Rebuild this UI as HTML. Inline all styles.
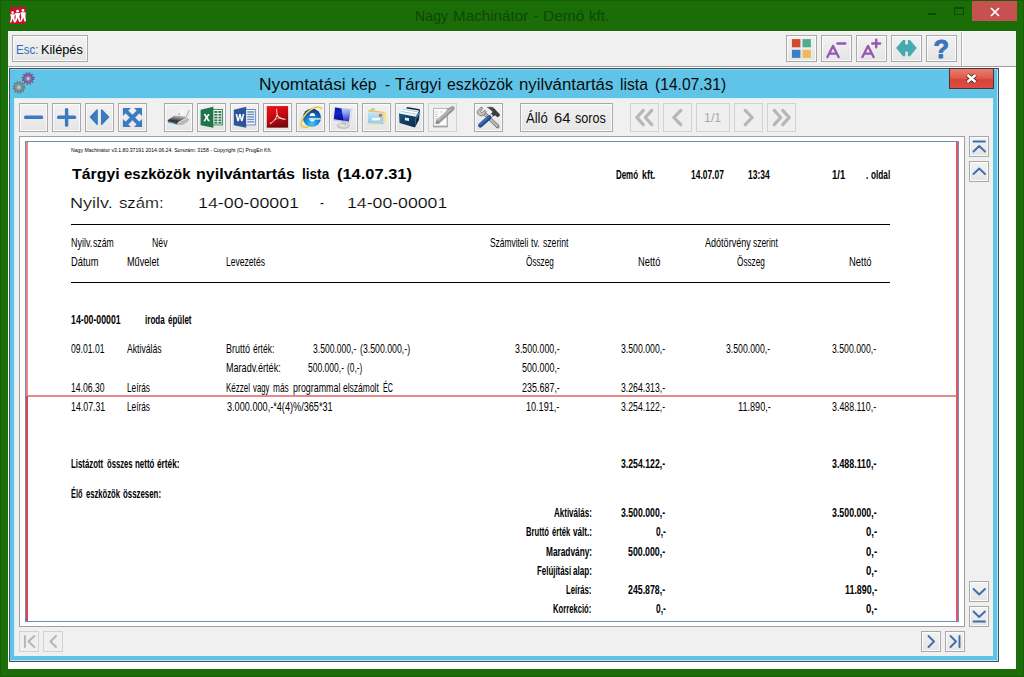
<!DOCTYPE html>
<html lang="hu">
<head>
<meta charset="utf-8">
<title>Nagy Machinátor - Demó kft.</title>
<style>
*{box-sizing:border-box;margin:0;padding:0}
html,body{width:1024px;height:677px;overflow:hidden;background:#1b6e07;font-family:"Liberation Sans",sans-serif}
#root{position:relative;width:1024px;height:677px;background:#1b6e07;overflow:hidden}
.a{position:absolute}
.t{position:absolute;white-space:pre;line-height:1;transform-origin:0 0;color:#000}
.btn{position:absolute;border:1px solid #a9a9a9;background:linear-gradient(#f2f2f2,#e5e5e5);box-shadow:inset 0 0 0 1px rgba(255,255,255,.75)}
.btn.dis{border-color:#d2d2d2;background:#efefef;box-shadow:none}
.btn svg{position:absolute;left:0;top:0}
</style>
</head>
<body>
<div id="root">
<!-- outer window frame -->
<div class="a" style="left:0;top:0;width:1024px;height:677px;border:1px solid #175f06"></div>
<!-- app icon -->
<svg class="a" style="left:10px;top:7px" width="16" height="17" viewBox="0 0 16 17">
<rect width="16" height="17" fill="#c4122f"/>
<g fill="#fff">
<circle cx="2.6" cy="5.6" r="1.3"/><path d="M0.2 7.2h4.8l-0.6 3.6 1 4.6h-1.3l-1.5-3.6-1.3 3.6H0l1-4.6z"/>
<circle cx="7.6" cy="4.2" r="1.4"/><path d="M5 6h5.2l-0.8 4 1.2 5h-1.4l-1.6-4-1.6 4H4.6l1.2-5z"/>
<circle cx="13" cy="3.4" r="1.4"/><path d="M10.4 5.2h5.4l-0.4 4.4 0.6 5h-1.5l-1.3-4-1.5 4h-1.4l1.1-5z"/>
</g>
</svg>
<!-- caption buttons -->
<div class="a" style="left:928px;top:13px;width:8px;height:2px;background:#0d4a03"></div>
<div class="a" style="left:954px;top:7px;width:10px;height:8px;border:1px solid #0d4a03;border-top-width:2px"></div>
<div class="a" style="left:972px;top:1px;width:45px;height:20px;background:#c75050"></div>
<svg class="a" style="left:990px;top:6.5px" width="10" height="10" viewBox="0 0 10 10"><path d="M1 1l8 8M9 1l-8 8" stroke="#fff" stroke-width="1.7" fill="none"/></svg>

<!-- client area -->
<div class="a" style="left:8px;top:31px;width:1008px;height:638px;background:#fff"></div>
<!-- top toolbar -->
<div class="a" style="left:8px;top:31px;width:1008px;height:36px;background:#f0f0f0;border-bottom:1px solid #a0a0a0;border-top:1px solid #fafafa"></div>
<div class="a" style="left:961px;top:32px;width:2px;height:34px;background:#b0b0b0;border-right:1px solid #fff"></div>
<div class="btn" style="left:12px;top:35px;width:76px;height:27px"></div>
<div class="btn" style="left:786px;top:35px;width:31px;height:27px"><svg style="left:-1px;top:-1px" width="31" height="27" viewBox="0 0 31 27"><rect x="5.900" y="4.100" width="8.500" height="8.200" fill="#d24a2d"/><rect x="16.500" y="4.100" width="8.400" height="8.200" fill="#4eae8c"/><rect x="5.900" y="14.800" width="8.500" height="8.100" fill="#3a80c4"/><rect x="16.500" y="14.800" width="8.400" height="8.100" fill="#f0b95f"/></svg></div>
<div class="btn" style="left:821px;top:35px;width:31px;height:27px"><svg style="left:-1px;top:-1px" width="31" height="27" viewBox="0 0 31 27"><path d="M6.400 22.100L12 10.900L17.600 22.100M8.700 18.700H15.300" fill="none" stroke="#9657b3" stroke-width="2.300" stroke-linecap="round" stroke-linejoin="round"/><path d="M16.500 8.500H24.200" stroke="#9657b3" stroke-width="2.400" stroke-linecap="round"/></svg></div>
<div class="btn" style="left:856px;top:35px;width:31px;height:27px"><svg style="left:-1px;top:-1px" width="31" height="27" viewBox="0 0 31 27"><path d="M6.400 22.100L12 10.900L17.600 22.100M8.700 18.700H15.300" fill="none" stroke="#9657b3" stroke-width="2.300" stroke-linecap="round" stroke-linejoin="round"/><path d="M16.300 8.500H24.100M20.200 4.800V12.200" stroke="#9657b3" stroke-width="2.400" stroke-linecap="round"/></svg></div>
<div class="btn" style="left:891px;top:35px;width:31px;height:27px"><svg style="left:-1px;top:-1px" width="31" height="27" viewBox="0 0 31 27"><g fill="#45abb0"><path d="M5.100 12.900L12 5.100H14.300V21.200H12Z"/><path d="M25.800 12.900L19 5.100H16.900V21.200H19Z"/><rect x="14" y="9.400" width="3.200" height="7.200"/></g></svg></div>
<div class="btn" style="left:926px;top:35px;width:31px;height:27px"><svg style="left:-1px;top:-1px" width="31" height="27" viewBox="0 0 31 27"><text x="15.300" y="22.900" text-anchor="middle" font-family="Liberation Sans" font-weight="bold" font-size="25.500" fill="#3b74b9" stroke="#3b74b9" stroke-width="0.900" stroke-linejoin="round">?</text></svg></div>

<!-- inner window -->
<div class="a" style="left:9px;top:68px;width:990px;height:594px;background:#60c4e8;border:1px solid #3b5563"></div>
<div class="a" style="left:14px;top:98px;width:979px;height:558px;background:#f0f0f0;border:1px solid #d6eef8;border-right:0;border-bottom:0"></div>
<div class="a" style="left:10px;top:660px;width:988px;height:1px;background:#b5e2f5"></div><div class="a" style="left:997px;top:69px;width:1px;height:592px;background:#b5e2f5"></div>
<div class="a" style="left:10px;top:69px;width:988px;height:1px;background:#8ad4ef"></div>
<svg class="a" style="left:10px;top:69px" width="32" height="28" viewBox="0 0 32 28"><circle cx="18.1" cy="9.5" r="5.7" fill="none" stroke="#6a5484" stroke-width="1.400" stroke-dasharray="1.492 1.492"/><circle cx="18.1" cy="9.5" r="5.100" fill="#6a5484"/><circle cx="18.1" cy="9.5" r="4.300" fill="#84639a"/><circle cx="18.1" cy="9.5" r="2.600" fill="#9580aa"/><circle cx="18.1" cy="9.5" r="1.500" fill="#9ad4ee"/><circle cx="8.9" cy="18.3" r="5.7" fill="none" stroke="#66787c" stroke-width="1.400" stroke-dasharray="1.492 1.492"/><circle cx="8.9" cy="18.3" r="5.100" fill="#66787c"/><circle cx="8.9" cy="18.3" r="4.300" fill="#7f8e8a"/><circle cx="8.9" cy="18.3" r="2.600" fill="#93a29e"/><circle cx="8.9" cy="18.3" r="1.500" fill="#9ad4ee"/></svg>
<!-- inner close -->
<div class="a" style="left:949px;top:68px;width:45px;height:21px;border:1px solid #4d3535;background:linear-gradient(#ea7d6f,#e05a4d 48%,#d7433a 56%,#dc4c42)"></div>
<svg class="a" style="left:965px;top:72px" width="13" height="13" viewBox="0 0 13 13"><path d="M2.5 3l8 7M10.5 3l-8 7" stroke="#3a2a2a" stroke-width="4.2" fill="none"/><path d="M2.5 3l8 7M10.5 3l-8 7" stroke="#fff" stroke-width="2.4" fill="none"/></svg>

<!-- inner toolbar buttons -->
<div class="btn" style="left:19px;top:103px;width:29px;height:29px"><svg style="left:-1px;top:-1px" width="29" height="29" viewBox="0 0 29 29"><rect x="5" y="12.6" width="19.2" height="3.4" rx="1.6" fill="#3a7bbf"/></svg></div>
<div class="btn" style="left:52px;top:103px;width:29px;height:29px"><svg style="left:-1px;top:-1px" width="29" height="29" viewBox="0 0 29 29"><rect x="5" y="12.6" width="19.2" height="3.4" rx="1.6" fill="#3a7bbf"/><rect x="12.9" y="5" width="3.4" height="18.8" rx="1.6" fill="#3a7bbf"/></svg></div>
<div class="btn" style="left:85px;top:103px;width:29px;height:29px"><svg style="left:-1px;top:-1px" width="29" height="29" viewBox="0 0 29 29"><path d="M5.500 14.100L12.100 7.100V21.300Z M23.500 14.100L16.700 7.100V21.300Z" fill="#3a7bbf" stroke="#3a7bbf" stroke-width="1.500" stroke-linejoin="round"/></svg></div>
<div class="btn" style="left:118px;top:103px;width:29px;height:29px"><svg style="left:-1px;top:-1px" width="29" height="29" viewBox="0 0 29 29"><g fill="#3a7bbf"><path d="M4.9 4.9H12.9L4.9 12.9Z M24 4.9V12.9L16 4.9Z M4.9 24V16L12.9 24Z M24 24H16L24 16Z"/><path d="M7 9.7L9.7 7 21.9 19.2 19.2 21.9Z M19.2 7L21.9 9.7 9.7 21.9 7 19.2Z"/></g></svg></div>
<div class="btn" style="left:164px;top:103px;width:29px;height:29px"><svg style="left:-1px;top:-1px" width="29" height="29" viewBox="0 0 29 29"><defs><linearGradient id="pg" x1="0.7" y1="0" x2="0.3" y2="1"><stop offset="0" stop-color="#c4c4c4"/><stop offset="0.35" stop-color="#8b8b8b"/><stop offset="0.75" stop-color="#3a3a3a"/><stop offset="1" stop-color="#1c1c1c"/></linearGradient><linearGradient id="pp" x1="0" y1="0" x2="1" y2="0.3"><stop offset="0" stop-color="#fcfcfc"/><stop offset="0.85" stop-color="#eeeeee"/><stop offset="1" stop-color="#9c9c9c"/></linearGradient></defs>
<path d="M16.900 6.100L25.300 7.200L22.400 13.900L15 12.500Z" fill="url(#pp)"/>
<path d="M25.100 7.300L22.300 13.800" stroke="#a0a0a0" stroke-width="0.700"/>
<path d="M15.300 10V12.600" stroke="#8e8e8e" stroke-width="0.800"/>
<path d="M3.600 17.300L10.400 12.700L21 13.700L24.600 15.900L24.200 18.200L18.200 21.900L12.700 21.400L4.500 19.600Z" fill="#a6a6a6"/>
<path d="M3.600 17.300L10.400 12.700L21 13.700L22.600 14.700L13.800 19.300Z" fill="url(#pg)"/>
<path d="M4.300 18.300L13.300 20L13 21.500L4.500 19.700Z" fill="#2d7fa3"/>
<path d="M5.300 19.300L9.500 20.100L9.400 20.900L5.400 20.200Z" fill="#b4dcea"/>
<path d="M13.800 19.300L22.600 14.700L23.500 15.300L14.400 20.300Z" fill="#e6e6e6"/>
<path d="M14.400 20.300L23.500 15.300L24.600 15.900L24.200 18.200L18.200 21.900L13.200 21.400Z" fill="#b9b9b9"/>
<path d="M3.600 17.300L13.800 19.300L13.300 20L4.300 18.300Z" fill="#1a1a1a"/></svg></div>
<div class="btn" style="left:197px;top:103px;width:29px;height:29px"><svg style="left:-1px;top:-1px" width="29" height="29" viewBox="0 0 29 29"><rect x="15" y="6.5" width="10.4" height="15.4" fill="#fff" stroke="#2f7d52" stroke-width="0.9"/>
<g fill="#2f7d52"><rect x="17.3" y="8" width="3.2" height="1.9"/><rect x="21.4" y="8" width="3" height="1.9"/><rect x="17.3" y="10.8" width="3.2" height="1.9"/><rect x="21.4" y="10.8" width="3" height="1.9"/><rect x="17.3" y="13.6" width="3.2" height="1.9"/><rect x="21.4" y="13.6" width="3" height="1.9"/><rect x="17.3" y="16.4" width="3.2" height="1.9"/><rect x="21.4" y="16.4" width="3" height="1.9"/><rect x="17.3" y="19" width="3.2" height="1.7"/><rect x="21.4" y="19" width="3" height="1.7"/></g>
<path d="M3.6 6.7L16.4 3.8V24.8L3.6 22.3Z" fill="#20744a"/>
<path d="M6.6 10.9h2l1.1 2.3 1.2-2.3h1.9l-2.1 3.6 2.2 3.8h-2l-1.3-2.5-1.3 2.5h-1.9l2.2-3.8z" fill="#fff"/></svg></div>
<div class="btn" style="left:230px;top:103px;width:29px;height:29px"><svg style="left:-1px;top:-1px" width="29" height="29" viewBox="0 0 29 29"><rect x="15" y="6.5" width="10.3" height="15.4" fill="#fff" stroke="#5a7fc0" stroke-width="0.9"/>
<g fill="#6f8fc8"><rect x="17.2" y="8.2" width="7" height="1.5"/><rect x="17.2" y="10.7" width="7" height="1.5"/><rect x="17.2" y="13.2" width="7" height="1.5"/><rect x="17.2" y="15.7" width="7" height="1.5"/><rect x="17.2" y="18.2" width="7" height="1.5"/></g>
<path d="M3.8 6.7L16.2 3.8V24.8L3.8 22.3Z" fill="#2b579a"/>
<path d="M5.6 11h1.6l0.9 4.6 1.1-4.6h1.5l1.1 4.6 0.9-4.6h1.6l-1.7 7.2h-1.6l-1.05-4.5-1.05 4.5h-1.6z" fill="#fff"/></svg></div>
<div class="btn" style="left:263px;top:103px;width:29px;height:29px"><svg style="left:-1px;top:-1px" width="29" height="29" viewBox="0 0 29 29"><defs><linearGradient id="pdfg" x1="0.1" y1="0" x2="0.5" y2="1"><stop offset="0" stop-color="#f01216"/><stop offset="0.5" stop-color="#c50a10"/><stop offset="1" stop-color="#820809"/></linearGradient></defs>
<rect x="3.800" y="3.100" width="21.300" height="21.300" fill="url(#pdfg)"/>
<rect x="3.800" y="23.600" width="21.300" height="0.800" fill="#5e0606"/>
<g fill="none" stroke="#fff" stroke-linecap="round">
<path d="M13.600 6.200C13.300 8.600 14.400 10.800 14.100 12.400C13.100 15.600 10.600 18.600 7.800 20.400" stroke-width="1" stroke-opacity="0.900"/>
<path d="M14.100 12.400C15.600 14.600 18.600 16 22.200 16.300" stroke-width="1.100" stroke-opacity="0.900"/>
<path d="M11.600 16.700C13.400 15.900 15.400 15.400 17.400 15.200" stroke-width="0.700" stroke-opacity="0.650"/>
<path d="M7.800 20.400C7.200 20.900 6.700 20.300 7.400 19.600" stroke-width="0.900" stroke-opacity="0.800"/>
</g></svg></div>
<div class="btn" style="left:296px;top:103px;width:29px;height:29px"><svg style="left:-1px;top:-1px" width="29" height="29" viewBox="0 0 29 29"><defs><radialGradient id="ieg" cx="0.5" cy="0.85" r="0.85"><stop offset="0" stop-color="#46c2f8"/><stop offset="0.45" stop-color="#1b86d0"/><stop offset="0.8" stop-color="#0d4f9c"/><stop offset="1" stop-color="#0a3472"/></radialGradient></defs>
<circle cx="15.900" cy="14.700" r="9.100" fill="url(#ieg)"/>
<path d="M13.600 12.900C13.800 11 14.900 10.100 16.400 10.100C17.900 10.100 19 11 19.200 12.900Z" fill="#fff"/>
<rect x="12.900" y="15.200" width="11.900" height="1.400" fill="#d9effc"/>
<path d="M13.600 16.400H18.900C18.500 17.800 17.600 18.500 16.300 18.500C15 18.500 14 17.800 13.600 16.400Z" fill="#fff"/>
<path d="M25.600 5.400C24 3.600 20.500 3.800 17.300 5.200C14.500 6.400 12 8.400 10 10.800C7.600 13.700 5.800 16.800 5.300 19.400C4.900 21.600 5.300 23.300 6.600 23.900C8.200 24.500 10.500 24.300 12.700 23.500" fill="none" stroke="#f1c534" stroke-width="1.500" stroke-linecap="round"/>
<path d="M17.300 5.200C14.500 6.400 12 8.400 10 10.800C8.500 12.600 7.200 14.500 6.400 16.300" fill="none" stroke="#f7dc6a" stroke-width="0.700"/></svg></div>
<div class="btn" style="left:329px;top:103px;width:29px;height:29px"><svg style="left:-1px;top:-1px" width="29" height="29" viewBox="0 0 29 29"><defs><linearGradient id="mgl" x1="0" y1="0" x2="0.2" y2="1"><stop offset="0" stop-color="#0a10a8"/><stop offset="0.5" stop-color="#1226c8"/><stop offset="1" stop-color="#0a1290"/></linearGradient><linearGradient id="mgr" x1="0" y1="0" x2="0.15" y2="1"><stop offset="0" stop-color="#d4dcff"/><stop offset="0.5" stop-color="#8a9cf4"/><stop offset="1" stop-color="#2a3ed0"/></linearGradient><radialGradient id="mst" cx="0.5" cy="0.4" r="0.7"><stop offset="0" stop-color="#f4f4f4"/><stop offset="1" stop-color="#b4b4b4"/></radialGradient></defs>
<ellipse cx="14.300" cy="22.700" rx="6.300" ry="2.800" fill="url(#mst)" stroke="#b0b0b0" stroke-width="0.400"/>
<path d="M12.400 18.200L17.400 19.200L17 22.200L12.800 21.800Z" fill="#c4c4c4"/>
<path d="M5.600 4L23.400 6.200L21.500 20.300L4.300 17.400Z" fill="#c6c9d2"/>
<path d="M21.500 6.500L23.400 6.200L21.500 20.300L19.900 18.400Z" fill="#e3e5ea"/>
<path d="M6.200 4.600L21.500 6.500L19.900 18.400L4.900 15.900Z" fill="url(#mgr)"/>
<path d="M6.200 4.600L12.400 5.400L14.600 17.500L4.900 15.900Z" fill="url(#mgl)"/></svg></div>
<div class="btn" style="left:362px;top:103px;width:29px;height:29px"><svg style="left:-1px;top:-1px" width="29" height="29" viewBox="0 0 29 29"><defs><linearGradient id="mlb" x1="0" y1="0" x2="0" y2="1"><stop offset="0" stop-color="#bfe3f7"/><stop offset="1" stop-color="#86cbf0"/></linearGradient></defs>
<path d="M9.100 4.900L13 5.300L12.600 8L8.800 7.600Z" fill="#a9dc98"/>
<path d="M7 6.700L24.200 9.300L23.500 19.700L6.600 18.300Z" fill="#f2e58a"/>
<path d="M6.600 6.800L22.400 9L21.900 12L6.400 10Z" fill="#f1bf72"/>
<path d="M6 9.300L21.600 10.250L21.300 21.200L6 19.900Z" fill="url(#mlb)"/>
<path d="M6 9.300L21.600 10.250" stroke="#e2f2fb" stroke-width="0.600"/>
<rect x="16.900" y="10.900" width="3.200" height="2.800" fill="#cf7224"/>
<rect x="10.100" y="14.900" width="7.800" height="2.500" fill="#fff"/>
<path d="M3.700 19.500C7 21.800 12 21.600 16.500 19.800C19 18.800 21 18 22.800 17.800" fill="none" stroke="#f4dd80" stroke-width="0.900"/></svg></div>
<div class="btn" style="left:395px;top:103px;width:29px;height:29px"><svg style="left:-1px;top:-1px" width="29" height="29" viewBox="0 0 29 29"><defs><linearGradient id="bxf" x1="0" y1="0" x2="0.6" y2="1"><stop offset="0" stop-color="#1d5a8a"/><stop offset="0.5" stop-color="#0f3f68"/><stop offset="1" stop-color="#0a2f52"/></linearGradient></defs>
<path d="M12.100 4L24.900 6.300L24.600 8.500L11 6Z" fill="#0b2740"/>
<path d="M8.400 4.900L24 7.400L20.900 13.900L4.300 10.800Z" fill="#eef3f7"/>
<path d="M8 6.400L22.800 8.900M6.600 8.400L21.800 11.200" stroke="#a9c6dc" stroke-width="0.900"/>
<path d="M7.300 7.400L22.300 10" stroke="#ffffff" stroke-width="1.100"/>
<path d="M20.900 13.700L24.900 6.500L24 17.100L19.900 24.600Z" fill="#0a2a47"/>
<path d="M21.400 13.800L24.400 8.400L24.100 11L21.200 16.600Z" fill="#4f93c4"/>
<path d="M4 10.600L20.900 13.700L19.900 24.600L4.600 19.900Z" fill="url(#bxf)"/>
<path d="M9.900 14.500L14.100 15.300L14 17.900L9.900 17.200Z" fill="#efece2"/></svg></div>
<div class="btn dis" style="left:428px;top:103px;width:29px;height:29px"><svg style="left:-1px;top:-1px" width="29" height="29" viewBox="0 0 29 29"><rect x="5.600" y="5.400" width="13.700" height="18" fill="#fafafa" stroke="#b2b2b2" stroke-width="1"/>
<rect x="5.100" y="22.700" width="14.700" height="1.700" fill="#a2a2a2"/>
<rect x="18.800" y="5" width="1" height="19" fill="#a8a8a8"/>
<g stroke="#b9b9b9" stroke-width="0.700"><path d="M7 9H9.800M11.900 9H14.500M7 11.400H9.800M7 13.600H9.800M7 15.800H9.800"/></g>
<path d="M24.600 5.400L10 18.600" stroke="#9a9a9a" stroke-width="4.400" stroke-linecap="round"/>
<path d="M23.900 4.900L9 18.200" stroke="#bebebe" stroke-width="1.400" stroke-linecap="round"/>
<path d="M8.700 16.800L11.800 20.200L7.200 21Z" fill="#8a8a8a"/>
<path d="M19.500 5.600L23.400 3.800L24.300 4.700L20.600 6.600Z" fill="#8f8f8f"/></svg></div>
<div class="btn" style="left:474px;top:103px;width:29px;height:29px"><svg style="left:-1px;top:-1px" width="29" height="29" viewBox="0 0 29 29"><path d="M21.400 21.100L23.800 23.600" stroke="#8a8a8a" stroke-width="3.400" stroke-linecap="round"/>
<path d="M10.500 10.500L23.200 23" stroke="#6a6a6a" stroke-width="3.600" stroke-linecap="round"/>
<path d="M10.500 10.500L23.200 23" stroke="#bcbcbc" stroke-width="2.400" stroke-linecap="round"/>
<path d="M3.400 8.400L7.200 4L8.900 5.200L6.400 8.300L7.800 9.700L10.900 7.200L12.300 8.700L9.700 12.300C7.900 13.300 5.600 12.900 4.300 11.500C3.500 10.600 3.200 9.500 3.400 8.400Z" fill="#c4c4c4" stroke="#666" stroke-width="0.800" stroke-linejoin="round"/>
<path d="M18.900 11.200L14.800 14.900" stroke="#8f8f8f" stroke-width="3.200"/>
<path d="M18.900 11.200L14.800 14.900" stroke="#f2f2f2" stroke-width="1.800"/>
<path d="M15.200 14.500L6.300 22.300" stroke="#1d4a86" stroke-width="4.400" stroke-linecap="round"/>
<path d="M14.600 14.200L5.900 21.800" stroke="#3c76bd" stroke-width="1.600" stroke-linecap="round"/>
<path d="M12.700 4.600C15 3.400 18.300 3.600 20.400 5.400L25.900 11.400C26.200 12.400 24.400 14.200 23.300 14.200L21.300 12.200L19.600 13.400L17.200 10.600L18.600 8.900C17 6.800 15 5.600 12.700 4.600Z" fill="#3c3c3c"/>
<path d="M14.200 4.700C16.400 4.100 18.600 4.800 20 6" stroke="#777" stroke-width="0.700" fill="none"/></svg></div>
<div class="btn" style="left:520px;top:103px;width:93px;height:29px"></div>
<div class="btn dis" style="left:630px;top:103px;width:29px;height:29px"><svg style="left:-1px;top:-1px" width="29" height="29" viewBox="0 0 29 29"><path d="M13.300 7.400L6.800 14.500L13.300 21.600 M21.800 7.400L15.300 14.500L21.800 21.600" fill="none" stroke="#b6b6b6" stroke-width="3.2" stroke-linecap="round" stroke-linejoin="round"/></svg></div>
<div class="btn dis" style="left:663px;top:103px;width:29px;height:29px"><svg style="left:-1px;top:-1px" width="29" height="29" viewBox="0 0 29 29"><path d="M17.800 7.400L10.800 14.500L17.800 21.600" fill="none" stroke="#b6b6b6" stroke-width="3.2" stroke-linecap="round" stroke-linejoin="round"/></svg></div>
<div class="btn dis" style="left:696px;top:103px;width:34px;height:29px"></div>
<div class="btn dis" style="left:734px;top:103px;width:29px;height:29px"><svg style="left:-1px;top:-1px" width="29" height="29" viewBox="0 0 29 29"><path d="M11.200 7.400L18.200 14.500L11.200 21.600" fill="none" stroke="#b6b6b6" stroke-width="3.2" stroke-linecap="round" stroke-linejoin="round"/></svg></div>
<div class="btn dis" style="left:767px;top:103px;width:29px;height:29px"><svg style="left:-1px;top:-1px" width="29" height="29" viewBox="0 0 29 29"><path d="M7.200 7.400L13.700 14.500L7.200 21.600 M15.700 7.400L22.200 14.500L15.700 21.600" fill="none" stroke="#b6b6b6" stroke-width="3.2" stroke-linecap="round" stroke-linejoin="round"/></svg></div>

<!-- document panel -->
<div class="a" style="left:19px;top:136px;width:946px;height:491px;background:#fff;border:1px solid #a0a0a0"></div>
<!-- page -->
<div class="a" style="left:25px;top:141px;width:934px;height:481px;border:1px solid #6f8fba"></div>
<div class="a" style="left:26px;top:142px;width:2px;height:254px;background:#ea8585"></div>
<div class="a" style="left:26px;top:396px;width:2px;height:225px;background:#e2414e"></div>
<div class="a" style="left:956px;top:142px;width:2px;height:479px;background:#e2585f"></div>
<div class="a" style="left:28px;top:395px;width:928px;height:2px;background:#e68a8e"></div>
<!-- black rules -->
<div class="a" style="left:71px;top:224px;width:819px;height:1px;background:#000"></div>
<div class="a" style="left:71px;top:282px;width:819px;height:1px;background:#000"></div>

<!-- scroll buttons -->
<div class="btn" style="left:969px;top:136px;width:20px;height:21px"><svg style="left:-1px;top:-1px" width="20" height="21" viewBox="0 0 20 21"><path d="M4.5 5.5H16 M4.5 15.5L10.2 10L16 15.5" fill="none" stroke="#3e6fa8" stroke-width="1.9" stroke-linecap="round" stroke-linejoin="round"/></svg></div>
<div class="btn" style="left:969px;top:161px;width:20px;height:21px"><svg style="left:-1px;top:-1px" width="20" height="21" viewBox="0 0 20 21"><path d="M4.5 13L10.2 7.5L16 13" fill="none" stroke="#3e6fa8" stroke-width="1.9" stroke-linecap="round" stroke-linejoin="round"/></svg></div>
<div class="btn" style="left:969px;top:581px;width:20px;height:21px"><svg style="left:-1px;top:-1px" width="20" height="21" viewBox="0 0 20 21"><path d="M4.5 8L10.2 13.5L16 8" fill="none" stroke="#3e6fa8" stroke-width="1.9" stroke-linecap="round" stroke-linejoin="round"/></svg></div>
<div class="btn" style="left:969px;top:606px;width:20px;height:21px"><svg style="left:-1px;top:-1px" width="20" height="21" viewBox="0 0 20 21"><path d="M4.5 5.5L10.2 11L16 5.5 M4.5 15.5H16" fill="none" stroke="#3e6fa8" stroke-width="1.9" stroke-linecap="round" stroke-linejoin="round"/></svg></div>
<div class="btn dis" style="left:19px;top:631px;width:20px;height:21px"><svg style="left:-1px;top:-1px" width="20" height="21" viewBox="0 0 20 21"><path d="M5.9 5V16 M15.3 5L9.500 10.5L15.3 16" fill="none" stroke="#b4b4b4" stroke-width="1.9" stroke-linecap="round" stroke-linejoin="round"/></svg></div>
<div class="btn dis" style="left:43px;top:631px;width:20px;height:21px"><svg style="left:-1px;top:-1px" width="20" height="21" viewBox="0 0 20 21"><path d="M13 5L7.5 10.5L13 16" fill="none" stroke="#b4b4b4" stroke-width="1.9" stroke-linecap="round" stroke-linejoin="round"/></svg></div>
<div class="btn" style="left:921px;top:631px;width:20px;height:21px"><svg style="left:-1px;top:-1px" width="20" height="21" viewBox="0 0 20 21"><path d="M7.5 5L13 10.5L7.5 16" fill="none" stroke="#3e6fa8" stroke-width="1.9" stroke-linecap="round" stroke-linejoin="round"/></svg></div>
<div class="btn" style="left:945px;top:631px;width:20px;height:21px"><svg style="left:-1px;top:-1px" width="20" height="21" viewBox="0 0 20 21"><path d="M5.5 5L11 10.5L5.5 16 M14.5 5V16" fill="none" stroke="#3e6fa8" stroke-width="1.9" stroke-linecap="round" stroke-linejoin="round"/></svg></div>

<span class="t" style="left:414.53px;top:9.00px;font-size:14.6px;transform:scaleX(0.9742);color:#0e4706;">Nagy</span>
<span class="t" style="left:453.16px;top:9.00px;font-size:14.6px;transform:scaleX(1.0430);color:#0e4706;">Machinátor</span>
<span class="t" style="left:534.40px;top:9.00px;font-size:14.6px;transform:scaleX(0.8600);color:#0e4706;">-</span>
<span class="t" style="left:542.64px;top:9.00px;font-size:14.6px;transform:scaleX(1.0631);color:#0e4706;">Demó</span>
<span class="t" style="left:589.20px;top:9.00px;font-size:14.6px;transform:scaleX(1.0323);color:#0e4706;">kft.</span>
<span class="t" style="left:15.95px;top:43.00px;font-size:13.7px;transform:scaleX(0.8462);color:#2f6fb6;">Esc:</span>
<span class="t" style="left:40.77px;top:43.00px;font-size:13.7px;transform:scaleX(0.9308);">Kilépés</span>
<span class="t" style="left:259.14px;top:76.40px;font-size:16.3px;transform:scaleX(1.0650);color:#0a0a0a;">Nyomtatási</span>
<span class="t" style="left:351.32px;top:76.40px;font-size:16.3px;transform:scaleX(0.9764);color:#0a0a0a;">kép</span>
<span class="t" style="left:384.60px;top:76.40px;font-size:16.3px;transform:scaleX(0.9400);color:#0a0a0a;">-</span>
<span class="t" style="left:394.90px;top:76.40px;font-size:16.3px;transform:scaleX(1.0243);color:#0a0a0a;">Tárgyi</span>
<span class="t" style="left:446.70px;top:76.40px;font-size:16.3px;transform:scaleX(0.9720);color:#0a0a0a;">eszközök</span>
<span class="t" style="left:518.97px;top:76.40px;font-size:16.3px;transform:scaleX(1.0315);color:#0a0a0a;">nyilvántartás</span>
<span class="t" style="left:620.03px;top:76.40px;font-size:16.3px;transform:scaleX(0.9655);color:#0a0a0a;">lista</span>
<span class="t" style="left:655.24px;top:76.40px;font-size:16.3px;transform:scaleX(0.9588);color:#0a0a0a;">(14.07.31)</span>
<span class="t" style="left:526.00px;top:110.60px;font-size:14px;transform:scaleX(0.9338);color:#111;">Álló</span>
<span class="t" style="left:553.80px;top:110.60px;font-size:14px;transform:scaleX(1.0516);color:#111;">64</span>
<span class="t" style="left:575.00px;top:110.60px;font-size:14px;transform:scaleX(0.8997);color:#111;">soros</span>
<span class="t" style="left:704.00px;top:111.20px;font-size:13px;transform:scaleX(0.9528);color:#a9a9a9;">1/1</span>
<span class="t" style="left:70.80px;top:147.60px;font-size:5.7px;transform:scaleX(0.9062);">Nagy Machinátor v3.1.80.37191 2014.06.24. Sorszám: 3158 - Copyright (C) ProgEn Kft.</span>
<span class="t" style="left:71.70px;top:167.00px;font-size:14px;transform:scaleX(1.1332);font-weight:bold;">Tárgyi</span>
<span class="t" style="left:123.90px;top:167.00px;font-size:14px;transform:scaleX(1.0695);font-weight:bold;">eszközök</span>
<span class="t" style="left:196.30px;top:167.00px;font-size:14px;transform:scaleX(1.1468);font-weight:bold;">nyilvántartás</span>
<span class="t" style="left:302.30px;top:167.00px;font-size:14px;transform:scaleX(0.9707);font-weight:bold;">lista</span>
<span class="t" style="left:337.10px;top:167.00px;font-size:14px;transform:scaleX(1.1748);font-weight:bold;">(14.07.31)</span>
<span class="t" style="left:616.40px;top:168.00px;font-size:13.6px;transform:scaleX(0.5819);font-weight:bold;">Demó</span>
<span class="t" style="left:641.70px;top:168.00px;font-size:13.6px;transform:scaleX(0.6526);font-weight:bold;">kft.</span>
<span class="t" style="left:691.25px;top:168.00px;font-size:13.6px;transform:scaleX(0.6208);font-weight:bold;">14.07.07</span>
<span class="t" style="left:747.50px;top:168.00px;font-size:13.6px;transform:scaleX(0.6249);font-weight:bold;">13:34</span>
<span class="t" style="left:832.00px;top:168.00px;font-size:13.6px;transform:scaleX(0.6981);font-weight:bold;">1/1</span>
<span class="t" style="left:866.25px;top:168.00px;font-size:13.6px;transform:scaleX(0.5833);font-weight:bold;">.</span>
<span class="t" style="left:870.75px;top:168.00px;font-size:13.6px;transform:scaleX(0.6059);font-weight:bold;">oldal</span>
<span class="t" style="left:70.41px;top:195.75px;font-size:14px;transform:scaleX(1.2911);-webkit-text-stroke:0.17px #fff;">Nyilv.</span>
<span class="t" style="left:118.60px;top:195.75px;font-size:14px;transform:scaleX(1.1962);-webkit-text-stroke:0.17px #fff;">szám:</span>
<span class="t" style="left:197.73px;top:195.75px;font-size:14px;transform:scaleX(1.2720);-webkit-text-stroke:0.17px #fff;">14-00-00001</span>
<span class="t" style="left:319.75px;top:195.75px;font-size:14px;transform:scaleX(0.8500);-webkit-text-stroke:0.17px #fff;">-</span>
<span class="t" style="left:347.24px;top:195.75px;font-size:14px;transform:scaleX(1.2625);-webkit-text-stroke:0.17px #fff;">14-00-00001</span>
<span class="t" style="left:70.59px;top:236.00px;font-size:13.6px;transform:scaleX(0.6570);">Nyilv.</span>
<span class="t" style="left:93.25px;top:236.00px;font-size:13.6px;transform:scaleX(0.6376);">szám</span>
<span class="t" style="left:151.86px;top:236.00px;font-size:13.6px;transform:scaleX(0.6417);">Név</span>
<span class="t" style="left:490.00px;top:236.00px;font-size:13.6px;transform:scaleX(0.6177);">Számviteli</span>
<span class="t" style="left:531.25px;top:236.00px;font-size:13.6px;transform:scaleX(0.6566);">tv.</span>
<span class="t" style="left:542.50px;top:236.00px;font-size:13.6px;transform:scaleX(0.6334);">szerint</span>
<span class="t" style="left:705.40px;top:236.00px;font-size:13.6px;transform:scaleX(0.6655);">Adótörvény</span>
<span class="t" style="left:753.20px;top:236.00px;font-size:13.6px;transform:scaleX(0.6185);">szerint</span>
<span class="t" style="left:70.82px;top:255.20px;font-size:13.6px;transform:scaleX(0.6845);">Dátum</span>
<span class="t" style="left:126.83px;top:255.20px;font-size:13.6px;transform:scaleX(0.6728);">Művelet</span>
<span class="t" style="left:225.87px;top:255.20px;font-size:13.6px;transform:scaleX(0.6294);">Levezetés</span>
<span class="t" style="left:526.25px;top:255.20px;font-size:13.6px;transform:scaleX(0.6041);">Összeg</span>
<span class="t" style="left:638.06px;top:255.20px;font-size:13.6px;transform:scaleX(0.6870);">Nettó</span>
<span class="t" style="left:737.00px;top:255.20px;font-size:13.6px;transform:scaleX(0.6041);">Összeg</span>
<span class="t" style="left:848.55px;top:255.20px;font-size:13.6px;transform:scaleX(0.6951);">Nettó</span>
<span class="t" style="left:71.25px;top:312.75px;font-size:13.6px;transform:scaleX(0.6449);font-weight:bold;">14-00-00001</span>
<span class="t" style="left:145.00px;top:312.75px;font-size:13.6px;transform:scaleX(0.5939);font-weight:bold;">iroda</span>
<span class="t" style="left:168.25px;top:312.75px;font-size:13.6px;transform:scaleX(0.5864);font-weight:bold;">épület</span>
<span class="t" style="left:71.25px;top:341.50px;font-size:13.6px;transform:scaleX(0.6351);">09.01.01</span>
<span class="t" style="left:127.00px;top:341.50px;font-size:13.6px;transform:scaleX(0.6365);">Aktiválás</span>
<span class="t" style="left:225.84px;top:341.50px;font-size:13.6px;transform:scaleX(0.6627);">Bruttó</span>
<span class="t" style="left:253.00px;top:341.50px;font-size:13.6px;transform:scaleX(0.6246);">érték:</span>
<span class="t" style="left:313.25px;top:341.50px;font-size:13.6px;transform:scaleX(0.6300);">3.500.000,-</span>
<span class="t" style="left:359.50px;top:341.50px;font-size:13.6px;transform:scaleX(0.6436);">(3.500.000,-)</span>
<span class="t" style="left:515.00px;top:341.50px;font-size:13.6px;transform:scaleX(0.6483);">3.500.000,-</span>
<span class="t" style="left:621.25px;top:341.50px;font-size:13.6px;transform:scaleX(0.6410);">3.500.000,-</span>
<span class="t" style="left:726.25px;top:341.50px;font-size:13.6px;transform:scaleX(0.6410);">3.500.000,-</span>
<span class="t" style="left:832.00px;top:341.50px;font-size:13.6px;transform:scaleX(0.6410);">3.500.000,-</span>
<span class="t" style="left:225.83px;top:361.00px;font-size:13.6px;transform:scaleX(0.6661);">Maradv.érték:</span>
<span class="t" style="left:307.50px;top:361.00px;font-size:13.6px;transform:scaleX(0.6281);">500.000,-</span>
<span class="t" style="left:346.75px;top:361.00px;font-size:13.6px;transform:scaleX(0.6150);">(0,-)</span>
<span class="t" style="left:521.75px;top:361.00px;font-size:13.6px;transform:scaleX(0.6589);">500.000,-</span>
<span class="t" style="left:70.61px;top:380.50px;font-size:13.6px;transform:scaleX(0.6351);">14.06.30</span>
<span class="t" style="left:126.89px;top:380.50px;font-size:13.6px;transform:scaleX(0.6084);">Leírás</span>
<span class="t" style="left:225.91px;top:380.50px;font-size:13.6px;transform:scaleX(0.5907);">Kézzel</span>
<span class="t" style="left:253.30px;top:380.50px;font-size:13.6px;transform:scaleX(0.5706);">vagy</span>
<span class="t" style="left:273.00px;top:380.50px;font-size:13.6px;transform:scaleX(0.6104);">más</span>
<span class="t" style="left:292.70px;top:380.50px;font-size:13.6px;transform:scaleX(0.6538);">programmal</span>
<span class="t" style="left:343.30px;top:380.50px;font-size:13.6px;transform:scaleX(0.6246);">elszámolt</span>
<span class="t" style="left:382.87px;top:380.50px;font-size:13.6px;transform:scaleX(0.5258);">ÉC</span>
<span class="t" style="left:521.75px;top:380.50px;font-size:13.6px;transform:scaleX(0.6589);">235.687,-</span>
<span class="t" style="left:621.25px;top:380.50px;font-size:13.6px;transform:scaleX(0.6410);">3.264.313,-</span>
<span class="t" style="left:70.60px;top:399.75px;font-size:13.6px;transform:scaleX(0.6475);">14.07.31</span>
<span class="t" style="left:126.89px;top:399.75px;font-size:13.6px;transform:scaleX(0.6084);">Leírás</span>
<span class="t" style="left:226.50px;top:399.75px;font-size:13.6px;transform:scaleX(0.6719);">3.000.000,-*4(4)%/365*31</span>
<span class="t" style="left:526.33px;top:399.75px;font-size:13.6px;transform:scaleX(0.6669);">10.191,-</span>
<span class="t" style="left:621.25px;top:399.75px;font-size:13.6px;transform:scaleX(0.6410);">3.254.122,-</span>
<span class="t" style="left:737.58px;top:399.75px;font-size:13.6px;transform:scaleX(0.6706);">11.890,-</span>
<span class="t" style="left:832.00px;top:399.75px;font-size:13.6px;transform:scaleX(0.6506);">3.488.110,-</span>
<span class="t" style="left:71.25px;top:457.25px;font-size:13.6px;transform:scaleX(0.5767);font-weight:bold;">Listázott</span>
<span class="t" style="left:106.60px;top:457.25px;font-size:13.6px;transform:scaleX(0.5627);font-weight:bold;">összes</span>
<span class="t" style="left:134.60px;top:457.25px;font-size:13.6px;transform:scaleX(0.5833);font-weight:bold;">nettó</span>
<span class="t" style="left:156.80px;top:457.25px;font-size:13.6px;transform:scaleX(0.6083);font-weight:bold;">érték:</span>
<span class="t" style="left:621.25px;top:457.25px;font-size:13.6px;transform:scaleX(0.6410);font-weight:bold;">3.254.122,-</span>
<span class="t" style="left:832.00px;top:457.25px;font-size:13.6px;transform:scaleX(0.6518);font-weight:bold;">3.488.110,-</span>
<span class="t" style="left:71.25px;top:486.50px;font-size:13.6px;transform:scaleX(0.5397);font-weight:bold;">Élő</span>
<span class="t" style="left:85.70px;top:486.50px;font-size:13.6px;transform:scaleX(0.5634);font-weight:bold;">eszközök</span>
<span class="t" style="left:122.50px;top:486.50px;font-size:13.6px;transform:scaleX(0.5782);font-weight:bold;">összesen:</span>
<span class="t" style="left:553.75px;top:506.00px;font-size:13.6px;transform:scaleX(0.5887);font-weight:bold;">Aktiválás:</span>
<span class="t" style="left:525.70px;top:525.25px;font-size:13.6px;transform:scaleX(0.5610);font-weight:bold;">Bruttó</span>
<span class="t" style="left:551.60px;top:525.25px;font-size:13.6px;transform:scaleX(0.5586);font-weight:bold;">érték</span>
<span class="t" style="left:572.70px;top:525.25px;font-size:13.6px;transform:scaleX(0.5961);font-weight:bold;">vált.:</span>
<span class="t" style="left:545.50px;top:544.50px;font-size:13.6px;transform:scaleX(0.6098);font-weight:bold;">Maradvány:</span>
<span class="t" style="left:536.90px;top:563.75px;font-size:13.6px;transform:scaleX(0.5796);font-weight:bold;">Felújítási</span>
<span class="t" style="left:572.70px;top:563.75px;font-size:13.6px;transform:scaleX(0.5961);font-weight:bold;">alap:</span>
<span class="t" style="left:566.25px;top:583.00px;font-size:13.6px;transform:scaleX(0.5675);font-weight:bold;">Leírás:</span>
<span class="t" style="left:553.25px;top:602.25px;font-size:13.6px;transform:scaleX(0.5633);font-weight:bold;">Korrekció:</span>
<span class="t" style="left:621.25px;top:506.00px;font-size:13.6px;transform:scaleX(0.6410);font-weight:bold;">3.500.000,-</span>
<span class="t" style="left:655.50px;top:525.25px;font-size:13.6px;transform:scaleX(0.6194);font-weight:bold;">0,-</span>
<span class="t" style="left:628.25px;top:544.50px;font-size:13.6px;transform:scaleX(0.6457);font-weight:bold;">500.000,-</span>
<span class="t" style="left:628.25px;top:583.00px;font-size:13.6px;transform:scaleX(0.6457);font-weight:bold;">245.878,-</span>
<span class="t" style="left:655.50px;top:602.25px;font-size:13.6px;transform:scaleX(0.6194);font-weight:bold;">0,-</span>
<span class="t" style="left:832.00px;top:506.00px;font-size:13.6px;transform:scaleX(0.6483);font-weight:bold;">3.500.000,-</span>
<span class="t" style="left:865.50px;top:525.25px;font-size:13.6px;transform:scaleX(0.7009);font-weight:bold;">0,-</span>
<span class="t" style="left:865.50px;top:544.50px;font-size:13.6px;transform:scaleX(0.7009);font-weight:bold;">0,-</span>
<span class="t" style="left:865.50px;top:563.75px;font-size:13.6px;transform:scaleX(0.7009);font-weight:bold;">0,-</span>
<span class="t" style="left:844.50px;top:583.00px;font-size:13.6px;transform:scaleX(0.6532);font-weight:bold;">11.890,-</span>
<span class="t" style="left:865.50px;top:602.25px;font-size:13.6px;transform:scaleX(0.7009);font-weight:bold;">0,-</span>
</div>
</body>
</html>
